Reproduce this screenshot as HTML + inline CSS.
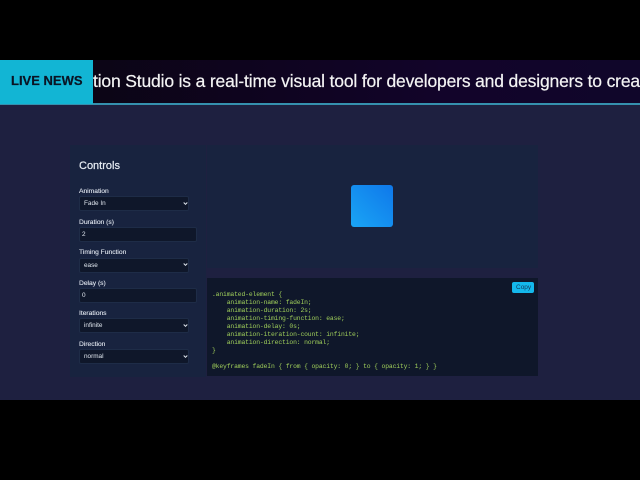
<!DOCTYPE html>
<html><head><meta charset="utf-8"><style>
html,body{margin:0;padding:0;width:640px;height:480px;overflow:hidden;background:#000;font-family:"Liberation Sans",sans-serif}
div,span{position:absolute;box-sizing:border-box;white-space:pre}
#main{left:0;top:60px;width:640px;height:340px;background:#1e2040}
#ticker{left:0;top:60px;width:640px;height:45px;background:linear-gradient(90deg,#0a0510,#12042a 70%,#10062a);border-bottom:2px solid #3590ae}
#clip{left:93px;top:60px;width:547px;height:43px;overflow:hidden}
#tt{left:0;top:10px;font-size:17.5px;line-height:22px;color:#f4f4f4;letter-spacing:-.165px;-webkit-text-stroke:.2px #f4f4f4}
#live{left:0;top:60px;width:93px;height:44px;background:#12b5d4}
#lt{left:11px;top:73px;font-size:13px;line-height:16px;font-weight:bold;color:#0a1424;-webkit-text-stroke:.2px #0a1424}
.panel{background:#18233f}
.lab{left:79px;font-size:6.7px;line-height:9px;color:#e2e8f0;-webkit-text-stroke:.1px #e2e8f0}
.sel{left:79px;width:110px;height:15px;background:#0f172a;border:1px solid #1e2c47;border-radius:2px}
.inp{left:79px;width:118px;height:15px;background:#0f172a;border:1px solid #1e2c47;border-radius:2px}
.v{left:84px;font-size:6.4px;line-height:8px;color:#e2e8f0}
svg{position:absolute}
#code{left:207px;top:278px;width:331px;height:98px;background:#0f172a}
#ct{left:212px;top:291px;font-family:"Liberation Mono",monospace;font-size:6.4px;line-height:8px;color:#9fce5a;letter-spacing:-.15px}
</style></head><body>
<div id="main"></div>
<div class="panel" style="left:70px;top:145px;width:136px;height:232px"></div>
<div class="panel" style="left:207px;top:145px;width:331px;height:123px"></div>
<div id="ticker"></div>
<div id="clip"><div id="tt">tion Studio is a real-time visual tool for developers and designers to crea</div></div>
<div id="live"></div>
<div id="lt">LIVE NEWS</div>
<div style="left:79px;top:160px;font-size:11px;line-height:13px;color:#e8edf4;-webkit-text-stroke:.2px #e8edf4">Controls</div>

<div class="lab" style="top:187px">Animation</div>
<div class="sel" style="top:196px"></div>
<div class="v" style="top:200px">Fade In</div>
<svg style="left:183px;top:201px" width="5" height="5" viewBox="0 0 5 5"><path d="M.7 1.5L2.5 3.3L4.3 1.5" fill="none" stroke="#e2e8f0" stroke-width="1"/></svg>

<div class="lab" style="top:218px">Duration (s)</div>
<div class="inp" style="top:227px"></div>
<div class="v" style="top:231px;left:82px">2</div>

<div class="lab" style="top:248px">Timing Function</div>
<div class="sel" style="top:258px"></div>
<div class="v" style="top:262px">ease</div>
<svg style="left:183px;top:262px" width="5" height="5" viewBox="0 0 5 5"><path d="M.7 1.5L2.5 3.3L4.3 1.5" fill="none" stroke="#e2e8f0" stroke-width="1"/></svg>

<div class="lab" style="top:279px">Delay (s)</div>
<div class="inp" style="top:288px"></div>
<div class="v" style="top:292px;left:82px">0</div>

<div class="lab" style="top:309px">Iterations</div>
<div class="sel" style="top:318px"></div>
<div class="v" style="top:322px">infinite</div>
<svg style="left:183px;top:323px" width="5" height="5" viewBox="0 0 5 5"><path d="M.7 1.5L2.5 3.3L4.3 1.5" fill="none" stroke="#e2e8f0" stroke-width="1"/></svg>

<div class="lab" style="top:340px">Direction</div>
<div class="sel" style="top:349px"></div>
<div class="v" style="top:353px">normal</div>
<svg style="left:183px;top:354px" width="5" height="5" viewBox="0 0 5 5"><path d="M.7 1.5L2.5 3.3L4.3 1.5" fill="none" stroke="#e2e8f0" stroke-width="1"/></svg>

<div style="left:351px;top:185px;width:42px;height:42px;border-radius:3px;background:linear-gradient(45deg,#1aa5f5,#0f78ea)"></div>

<div id="code"></div>
<div id="ct">.animated-element {
    animation-name: fadeIn;
    animation-duration: 2s;
    animation-timing-function: ease;
    animation-delay: 0s;
    animation-iteration-count: infinite;
    animation-direction: normal;
}

@keyframes fadeIn { from { opacity: 0; } to { opacity: 1; } }</div>
<div style="left:512px;top:282px;width:22px;height:11px;border-radius:2px;background:#14b8ec"></div>
<div style="left:516px;top:284px;font-size:6.5px;line-height:8px;color:#0f3a5c">Copy</div>
</body></html>
